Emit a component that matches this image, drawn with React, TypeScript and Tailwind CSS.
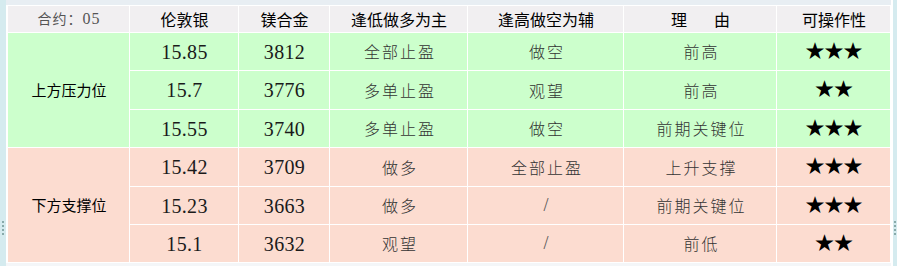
import React from "react";

const cjk = "font-['Noto_Sans_CJK_SC',sans-serif]";

type Row = { ag: string; mg: string; low: string; high: string; why: string; stars: string; h: string };

const upper: Row[] = [
  { ag: "15.85", mg: "3812", low: "全部止盈", high: "做空", why: "前高", stars: "★★★", h: "h-[38px]" },
  { ag: "15.7", mg: "3776", low: "多单止盈", high: "观望", why: "前高", stars: "★★", h: "h-[39px]" },
  { ag: "15.55", mg: "3740", low: "多单止盈", high: "做空", why: "前期关键位", stars: "★★★", h: "h-[38px]" },
];

const lower: Row[] = [
  { ag: "15.42", mg: "3709", low: "做多", high: "全部止盈", why: "上升支撑", stars: "★★★", h: "h-[39px]" },
  { ag: "15.23", mg: "3663", low: "做多", high: "/", why: "前期关键位", stars: "★★★", h: "h-[38px]" },
  { ag: "15.1", mg: "3632", low: "观望", high: "/", why: "前低", stars: "★★", h: "h-[38px]" },
];

const cell = "border border-white p-0 text-center align-middle";
const num = "font-['Liberation_Serif',serif] text-[20px] text-[#1a1a1a] tracking-[0.3px]";
const txt = `${cjk} font-light text-[16px] text-[#333] tracking-[2px] pl-[2px]`;

const Grip = () => (
  <div className="flex flex-col gap-[2px]">
    <span className="block h-[2px] w-[2px] bg-[#8aa]" />
    <span className="block h-[2px] w-[2px] bg-[#8aa]" />
    <span className="block h-[2px] w-[2px] bg-[#8aa]" />
    <span className="block h-[2px] w-[2px] bg-[#8aa]" />
  </div>
);

const Rows = ({ rows, label, bg }: { rows: Row[]; label: string; bg: string }) => (
  <>
    {rows.map((r, i) => (
      <tr key={r.ag} className={`${r.h} ${bg}`}>
        {i === 0 && (
          <td rowSpan={rows.length} className={`${cell} ${cjk} text-[15px] text-black`}>
            {label}
          </td>
        )}
        <td className={cell}>
          <span className={num}>{r.ag}</span>
        </td>
        <td className={cell}>
          <span className={num}>{r.mg}</span>
        </td>
        <td className={cell}>
          <span className={txt}>{r.low}</span>
        </td>
        <td className={cell}>
          {r.high === "/" ? (
            <span className="font-['Liberation_Serif',serif] text-[18px] text-[#555]">/</span>
          ) : (
            <span className={txt}>{r.high}</span>
          )}
        </td>
        <td className={cell}>
          <span className={txt}>{r.why}</span>
        </td>
        <td className={cell}>
          <span className={`${cjk} text-[19px] text-black leading-none`}>{r.stars}</span>
        </td>
      </tr>
    ))}
  </>
);

export default function App() {
  return (
    <div className="flex h-[266px] w-[897px] overflow-hidden bg-white">
      <div className="flex w-[6px] items-center justify-center bg-[#d5ebef] pt-[190px]">
        <Grip />
      </div>
      <div className="w-px bg-[#b3d2d9]" />
      <div className="flex flex-1 flex-col bg-white">
        <div className="h-[5px] bg-[#e8eef3]" />
        <div className="pl-px">
          <table className="w-[883px] table-fixed border-collapse">
            <colgroup>
              <col className="w-[122px]" />
              <col className="w-[109px]" />
              <col className="w-[91px]" />
              <col className="w-[138px]" />
              <col className="w-[156px]" />
              <col className="w-[153px]" />
              <col className="w-[114px]" />
            </colgroup>
            <thead>
              <tr className="h-[27px] bg-[#f1eff1]">
                <th className={`${cell} ${cjk} text-[14px] font-normal tracking-[1px] text-[#555]`}>
                  合约：<span className="font-['Liberation_Serif',serif] text-[16px]">05</span>
                </th>
                <th className={`${cell} ${cjk} text-[16px] font-normal text-black`}>伦敦银</th>
                <th className={`${cell} ${cjk} text-[16px] font-normal text-black`}>镁合金</th>
                <th className={`${cell} ${cjk} text-[16px] font-normal text-black`}>逢低做多为主</th>
                <th className={`${cell} ${cjk} text-[16px] font-normal text-black`}>逢高做空为辅</th>
                <th className={`${cell} ${cjk} text-[16px] font-normal text-black`}>
                  <span className="inline-flex gap-[27px]">
                    <span>理</span>
                    <span>由</span>
                  </span>
                </th>
                <th className={`${cell} ${cjk} text-[16px] font-normal text-black`}>可操作性</th>
              </tr>
            </thead>
            <tbody>
              <Rows rows={upper} label="上方压力位" bg="bg-[#ccffcc]" />
              <Rows rows={lower} label="下方支撑位" bg="bg-[#fcdcd0]" />
            </tbody>
          </table>
        </div>
        <div className="flex-1 bg-[#f4f6f8]" />
      </div>
      <div className="w-[2px] bg-white" />
      <div className="flex w-[4px] items-center justify-center bg-[#d5ebef] pt-[190px]">
        <Grip />
      </div>
    </div>
  );
}
